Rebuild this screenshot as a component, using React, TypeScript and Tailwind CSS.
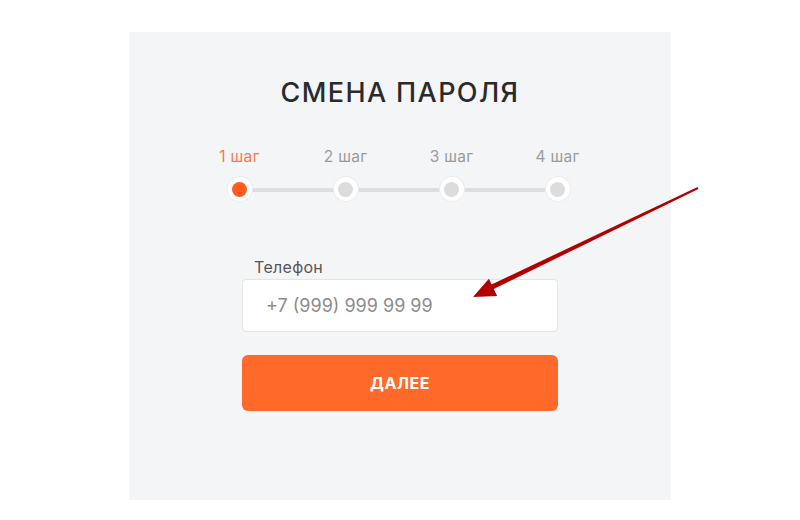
import React from 'react';

const steps = ['1 шаг', '2 шаг', '3 шаг', '4 шаг'];

const Stepper = ({ active }: { active: number }) => {
  return (
    <div className="relative grid grid-cols-4 w-[424px]">
      <div className="absolute left-[53px] right-[53px] top-[41px] h-[4px] bg-[#dedede]" />
      {steps.map((s, i) => (
        <div key={s} className="relative flex flex-col items-center">
          <span className={`text-[15.5px] leading-[20px] tracking-[0.3px] ${i === active ? 'text-[#ff7550]' : 'text-[#9a9a9a]'}`}>
            {s}
          </span>
          <div className="mt-[10px] w-[24px] h-[24px] rounded-full bg-white flex items-center justify-center shadow-[0_0_0_1px_#ececec]">
            <div className={`w-[15px] h-[15px] rounded-full ${i === active ? 'bg-[#ff5a1f]' : 'bg-[#dcdcdc]'}`} />
          </div>
        </div>
      ))}
    </div>
  );
};

const Arrow = () => (
  <svg className="absolute left-0 top-0 pointer-events-none" width="800" height="520" viewBox="0 0 800 520">
    <polygon
      points="698.4,188.9 697.6,187.1 488.9,285.7 491.1,290.2"
      fill="#b10000"
    />
    <polygon points="473,297 488.9,278.8 493,287.5 497.2,296" fill="#b10000" />
  </svg>
);

export default function App() {
  return (
    <div className="relative w-[800px] h-[520px] bg-white font-['Inter','Noto_Sans',sans-serif]">
      <div className="pt-[32px] flex justify-center">
        <div className="w-[542px] h-[468px] bg-[#f4f5f7] flex flex-col items-center pt-[44px]">
          <h1 className="text-[27px] leading-[34px] font-medium tracking-[1.4px] text-[#2a2a2a]">
            СМЕНА ПАРОЛЯ
          </h1>
          <div className="mt-[37px] ml-[-3px]">
            <Stepper active={0} />
          </div>
          <div className="mt-[56px] w-[316px] flex flex-col">
            <label className="pl-[12px] text-[16px] leading-[20px] tracking-[0.3px] text-[#555]">Телефон</label>
            <div className="mt-[2px] h-[53px] bg-white border border-[#e4e4e4] rounded-[4px] flex items-center px-[23px]">
              <span className="text-[18px] text-[#8c8c8c]">+7 (999) 999 99 99</span>
            </div>
            <button className="mt-[23px] h-[56px] rounded-[6px] bg-[#ff6a2b] text-white text-[16px] font-bold tracking-[0.5px]">
              ДАЛЕЕ
            </button>
          </div>
        </div>
      </div>
      <Arrow />
    </div>
  );
}
